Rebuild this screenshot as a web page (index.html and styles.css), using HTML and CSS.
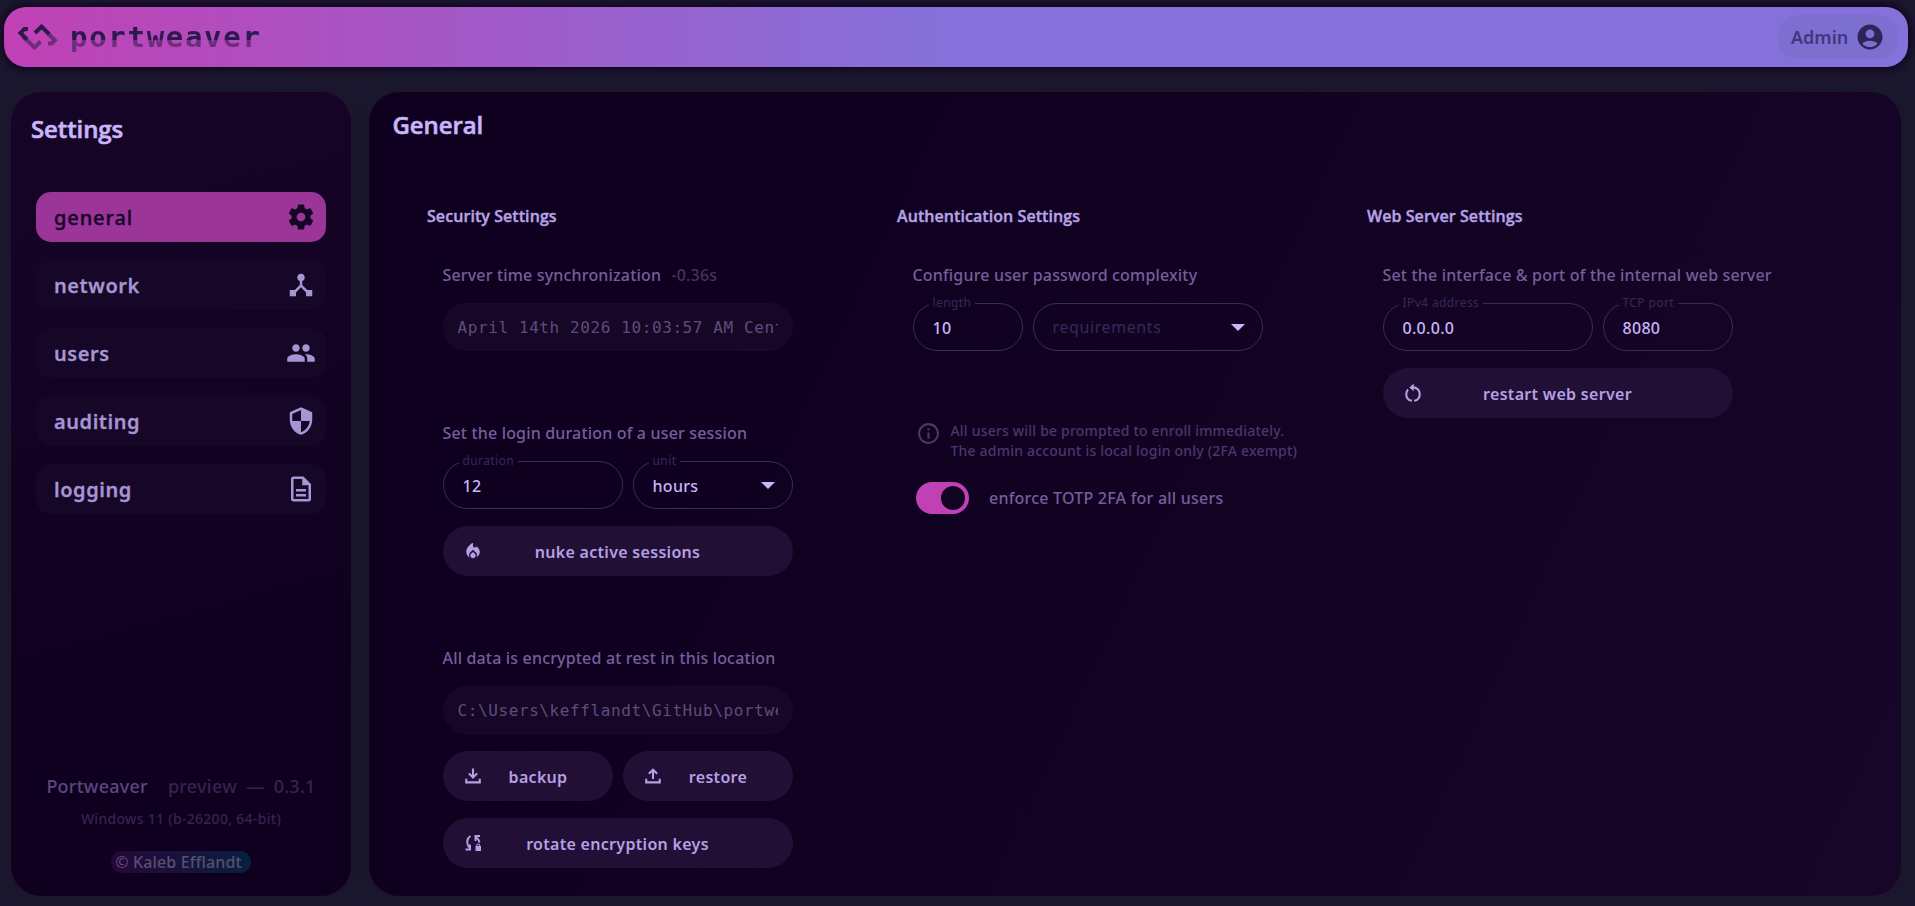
FILE: index.html
```html
<!DOCTYPE html>
<html lang="en">
<head>
<meta charset="utf-8">
<title>Portweaver – Settings</title>
<link rel="stylesheet" href="styles.css">
</head>
<body>
<header class="topbar">
  <div class="brand">
    <svg class="brand-mark" viewBox="0 0 42 28" width="42" height="28" fill="none" stroke-width="4">
      <path d="M6 13.500 L17.500 24.500 L23.500 18.500" stroke="#6d2c7c"/>
      <path d="M11 6 H7.500 L3.500 10 L10 16.500" stroke="#2d1a4d"/>
      <path d="M31 10.500 L37.800 17.300 L34.500 20.600 H31" stroke="#6d2c7c"/>
      <path d="M18 10 L24.500 3.500 L32 11" stroke="#2d1a4d"/>
    </svg>
    <span class="brand-name">portweaver</span>
  </div>
  <button class="account">
    <span>Admin</span>
    <svg viewBox="0 0 24 24" width="30" height="30"><path fill="currentColor" d="M12 2C6.480 2 2 6.480 2 12s4.480 10 10 10 10-4.480 10-10S17.520 2 12 2zm0 4c1.930 0 3.500 1.570 3.500 3.500S13.930 13 12 13s-3.500-1.570-3.500-3.500S10.070 6 12 6zm0 14c-2.030 0-4.430-.82-6.140-2.880C7.550 15.800 9.680 15 12 15s4.450.8 6.140 2.120C16.430 19.180 14.030 20 12 20z"/></svg>
  </button>
</header>

<main class="layout">
  <aside class="sidebar">
    <h1 class="sidebar-title">Settings</h1>
    <nav class="nav">
      <a class="nav-item nav-item--active"><span>general</span>
        <svg viewBox="0 0 24 24" width="30" height="30"><path fill="currentColor" d="M12 15.500A3.500 3.500 0 0 1 8.500 12 3.500 3.500 0 0 1 12 8.500a3.500 3.500 0 0 1 3.500 3.500 3.500 3.500 0 0 1-3.500 3.500m7.430-2.530c.04-.32.07-.64.07-.97s-.03-.66-.07-1l2.110-1.630c.19-.15.24-.42.12-.64l-2-3.460c-.12-.22-.39-.31-.61-.22l-2.490 1c-.52-.39-1.060-.73-1.690-.98l-.37-2.650A.506.506 0 0 0 14 2h-4c-.25 0-.46.18-.5.42l-.37 2.650c-.63.25-1.170.59-1.690.98l-2.490-1c-.22-.09-.49 0-.61.22l-2 3.460c-.13.22-.07.49.12.64L4.570 11c-.04.34-.07.67-.07 1s.03.65.07.97l-2.110 1.660c-.19.15-.25.42-.12.64l2 3.460c.12.22.39.3.61.22l2.490-1.010c.52.4 1.060.74 1.690.99l.37 2.650c.04.24.25.42.5.42h4c.25 0 .46-.18.5-.42l.37-2.650c.63-.26 1.170-.59 1.690-.99l2.490 1.010c.22.08.49 0 .61-.22l2-3.460c.12-.22.07-.49-.12-.64z"/></svg></a>
      <a class="nav-item"><span>network</span>
        <svg viewBox="0 0 24 24" width="32" height="32"><path fill="currentColor" d="M17 16l-4-4V8.820C14.160 8.400 15 7.300 15 6c0-1.660-1.340-3-3-3S9 4.340 9 6c0 1.300.84 2.400 2 2.820V12l-4 4H3v5h5v-3.050l4-4.200 4 4.200V21h5v-5h-4z"/></svg></a>
      <a class="nav-item"><span>users</span>
        <svg viewBox="0 0 24 24" width="30" height="30"><path fill="currentColor" d="M16 11c1.660 0 2.990-1.340 2.990-3S17.660 5 16 5c-1.660 0-3 1.340-3 3s1.340 3 3 3zm-8 0c1.660 0 2.990-1.340 2.990-3S9.660 5 8 5C6.340 5 5 6.340 5 8s1.340 3 3 3zm0 2c-2.330 0-7 1.170-7 3.500V19h14v-2.500c0-2.330-4.670-3.500-7-3.500zm8 0c-.29 0-.62.020-.97.050 1.160.84 1.970 1.970 1.970 3.450V19h6v-2.500c0-2.330-4.670-3.500-7-3.500z"/></svg></a>
      <a class="nav-item"><span>auditing</span>
        <svg viewBox="0 0 24 24" width="30" height="30"><path fill="currentColor" fill-rule="evenodd" d="M12 1L3 5v6c0 5.550 3.840 10.740 9 12 5.160-1.260 9-6.450 9-12V5l-9-4zm0 11h7c-.53 4.110-3.280 7.780-7 8.930V12H5V6.300l7-3.110V12z"/></svg></a>
      <a class="nav-item"><span>logging</span>
        <svg viewBox="0 0 24 24" width="30" height="30"><path fill="currentColor" d="M6 2a2 2 0 0 0-2 2v16c0 1.110.89 2 2 2h12a2 2 0 0 0 2-2V8l-6-6H6m0 2h7v5h5v11H6V4m2 8v2h8v-2H8m0 4v2h8v-2H8z"/></svg></a>
    </nav>
    <footer class="about">
      <div class="about-version"><span class="about-product">Portweaver</span><span>preview&ensp;—&ensp;0.3.1</span></div>
      <div class="about-os">Windows 11 (b-26200, 64-bit)</div>
      <div class="about-copy">© Kaleb Efflandt</div>
    </footer>
  </aside>

  <section class="content">
    <h2 class="content-title">General</h2>
    <div class="columns">
      <div class="column">
        <h3 class="column-title">Security Settings</h3>
        <div class="group group--time">
          <p class="label">Server time synchronization <span class="label-note">-0.36s</span></p>
          <div class="readout"><span>April 14th 2026 10:03:57 AM Central</span></div>
        </div>
        <div class="group group--session">
          <p class="label">Set the login duration of a user session</p>
          <div class="row">
            <fieldset class="field w180"><legend>duration</legend><span>12</span></fieldset>
            <fieldset class="field w160"><legend>unit</legend><span>hours</span><i class="caret"></i></fieldset>
          </div>
          <button class="btn">
            <svg viewBox="0 0 24 24" width="18" height="18"><path fill="currentColor" d="M16 6l-.44.550C14.380 8.020 12 7.190 12 5.300V1S3 5.500 3 13c0 3.600 1.900 6 4.600 7.600-.56-.79-.89-1.760-.89-2.800 0-1.320.52-2.800 1.470-3.740L12 10.300l3.820 3.760c.95.930 1.470 2.420 1.470 3.750 0 1.020-.31 2-.85 2.800 2.300-1.200 4.100-3.400 4.500-5.900.66-3.550-1.300-7.200-4.940-8.700zM12 13.200l-2.600 2.500C8.800 16.300 8.500 17 8.500 18c0 2 1.600 3.500 3.500 3.500s3.500-1.500 3.500-3.500c0-1-.3-1.700-.9-2.300L12 13.200z"/></svg>
            <span>nuke active sessions</span></button>
        </div>
        <div class="group group--data">
          <p class="label">All data is encrypted at rest in this location</p>
          <div class="readout"><span>C:\Users\kefflandt\GitHub\portweaver</span></div>
          <div class="row">
            <button class="btn w170">
              <svg viewBox="0 0 24 24" width="18" height="18" fill="none" stroke="currentColor" stroke-width="2.800"><path d="M12 2v12M6.500 8.500L12 14l5.500-5.500M3 15.500V20.500h18V15.500"/></svg>
              <span>backup</span></button>
            <button class="btn w170">
              <svg viewBox="0 0 24 24" width="18" height="18" fill="none" stroke="currentColor" stroke-width="2.800"><path d="M12 16V4M6.500 9L12 3.500 17.500 9M3 15.500V20.500h18V15.500"/></svg>
              <span>restore</span></button>
          </div>
          <button class="btn">
            <svg viewBox="0 0 18 18" width="18" height="18"><path fill="none" stroke="currentColor" stroke-width="2" d="M6.500 2C3 4 2 9 5 13.500M1.500 15.500H6V10.500M15.500 8.500C15 6.500 14 4.500 12 3M11.500 7V2H16"/><path fill="currentColor" d="M11.500 12h.7v-.6a2 2 0 0 1 4 0v.6h.8v5h-5.500zM13.200 12h2v-.6a1 1 0 0 0-2 0z"/></svg>
            <span>rotate encryption keys</span></button>
        </div>
      </div>

      <div class="column">
        <h3 class="column-title">Authentication Settings</h3>
        <div class="group group--time">
          <p class="label">Configure user password complexity</p>
          <div class="row">
            <fieldset class="field w110"><legend>length</legend><span>10</span></fieldset>
            <fieldset class="field field--plain w230"><span class="placeholder">requirements</span><i class="caret"></i></fieldset>
          </div>
        </div>
        <div class="notice">
          <svg viewBox="0 0 24 24" width="25" height="25"><path fill="currentColor" d="M11 7h2v2h-2zm0 4h2v6h-2zm1-9C6.480 2 2 6.480 2 12s4.480 10 10 10 10-4.480 10-10S17.520 2 12 2zm0 18c-4.410 0-8-3.590-8-8s3.590-8 8-8 8 3.590 8 8-3.590 8-8 8z"/></svg>
          <p>All users will be prompted to enroll immediately.<br>The admin account is local login only (2FA exempt)</p>
        </div>
        <div class="toggle-row"><span class="toggle"></span><span>enforce TOTP 2FA for all users</span></div>
      </div>

      <div class="column">
        <h3 class="column-title">Web Server Settings</h3>
        <div class="group">
          <p class="label">Set the interface &amp; port of the internal web server</p>
          <div class="row">
            <fieldset class="field w210"><legend>IPv4 address</legend><span>0.0.0.0</span></fieldset>
            <fieldset class="field w130"><legend>TCP port</legend><span>8080</span></fieldset>
          </div>
          <button class="btn">
            <svg viewBox="0 0 24 24" width="18" height="18"><path fill="none" stroke="currentColor" stroke-width="2.800" d="M12 4.500C17 4.500 21 8.500 21 13.500 21 18 17.800 21.500 13.500 22.300M10.500 22.300C6.200 21.500 3 18 3 13.500 3 11.200 3.900 9 5.400 7.400"/><path fill="currentColor" d="M13 -.5v10L7 4.500z"/></svg>
            <span>restart web server</span></button>
        </div>
      </div>
    </div>
  </section>
</main>
</body>
</html>
```

FILE: styles.css
```css
* { box-sizing: border-box; }
body {
  margin: 0;
  height: 906px;
  overflow: hidden;
  background: #1b172e;
  font-family: "Noto Sans", "Open Sans", sans-serif;
  font-weight: 500;
  color: #c8b5fa;
}
h1, h2, h3, p { margin: 0; }
button { font: inherit; border: 0; }

.topbar {
  display: flex;
  align-items: center;
  justify-content: space-between;
  height: 60px;
  margin: 7px 7px 0 4px;
  padding: 0 10px 0 13px;
  border-radius: 22px;
  background: linear-gradient(90deg, #c041b5 0%, #8472da 50%, #8472da 100%);
  box-shadow: 0 0 8px 2px #10001f;
}
.brand { display: flex; align-items: center; gap: 11px; }
.brand-name {
  font-family: "DejaVu Sans Mono", monospace;
  font-size: 29px;
  line-height: 30px;
  letter-spacing: 1.700px;
  font-weight: 700;
  color: transparent;
  background: linear-gradient(#2d1a4d 60%, #6d2c7c 60%);
  background-clip: text;
}
.account {
  display: flex;
  align-items: center;
  gap: 7px;
  width: 120px;
  height: 44px;
  padding: 0 12px 0 13px;
  border-radius: 20px;
  background: #7d6fd0;
  color: #2f2459;
  font-size: 18px;
}
.account span { color: #443583; font-weight: 600; }
.account svg { flex: none; }

.layout { display: flex; gap: 17.500px; margin: 25px 14px 0 11px; height: 804px; }
.sidebar, .content { border-radius: 30px; box-shadow: 0 0 12px #1b1829; }
.sidebar {
  display: flex;
  flex-direction: column;
  width: 340px;
  padding: 18px 25px 23px;
  background: linear-gradient(165deg, #160526, #100020 75%);
}
.sidebar-title, .content-title {
  font-family: "Open Sans", sans-serif;
  font-size: 24px;
  line-height: 38px;
  font-weight: 600;
  letter-spacing: -.1px;
  -webkit-text-stroke: .6px currentColor;
}
.sidebar-title { margin-left: -5px; }
.nav { display: flex; flex-direction: column; gap: 18px; margin-top: 44px; }
.nav-item {
  display: flex;
  align-items: center;
  justify-content: space-between;
  height: 50px;
  padding: 0 10px 0 18px;
  border-radius: 15px;
  background: #160627;
  color: #a695d3;
  font-size: 20px;
  font-weight: 600;
  letter-spacing: .55px;
  -webkit-text-stroke: .3px currentColor;
}
.nav-item svg { width: 30px; flex: none; }
.nav-item--active { background: #9b3598; color: #160526; font-weight: 500; letter-spacing: .9px; }

.about { display: flex; flex-direction: column; align-items: center; margin-top: auto; color: #37234f; }
.about-version { display: flex; gap: 20px; font-size: 18px; line-height: 26px; letter-spacing: .25px; }
.about-product { color: #5b4780; }
.about-os { margin-top: 9px; font-size: 14px; line-height: 22px; letter-spacing: .3px; }
.about-copy {
  margin-top: 21px;
  padding: 0 9px 0 4px;
  border-radius: 11px;
  background: linear-gradient(90deg, #280538, #07203f);
  color: #56506f;
  font-size: 16px;
  line-height: 22px;
  letter-spacing: .15px;
}

.content { flex: 1; padding: 14px 24px 0; background: linear-gradient(115deg, #100020 20%, #170627 100%); }
.columns { display: grid; grid-template-columns: 470px 470px 1fr; margin: 61px 0 0 34px; }
.column-title {
  margin-left: .5px;
  font-family: "Open Sans", sans-serif;
  font-size: 16px;
  line-height: 22px;
  font-weight: 600;
  letter-spacing: .07px;
  color: #b5a3e5;
  -webkit-text-stroke: .4px currentColor;
}
.group { display: flex; flex-direction: column; align-items: flex-start; margin-left: 16px; }
.column-title + .group { margin-top: 36px; }
.label { font-size: 16px; line-height: 24px; letter-spacing: .17px; color: #755f9b; white-space: nowrap; }
.label-note { margin-left: 6px; color: #46315f; }
.group--time { height: 158px; }
.group--session { height: 225px; }
.readout {
  width: 350px;
  height: 48px;
  margin-top: 16px;
  padding: 0 14px;
  border: 1px solid #1a0929;
  border-radius: 24px;
  background: #170726;
  color: #604b7e;
  font-family: "DejaVu Sans Mono", monospace;
  font-size: 16px;
  font-weight: 400;
  line-height: 48px;
}
.readout span { display: block; overflow: hidden; white-space: pre; letter-spacing: .6px; }
.row { display: flex; align-items: flex-end; gap: 10px; }
.field {
  position: relative;
  display: block;
  height: 57px;
  min-width: 0;
  margin: 7px 0 0;
  padding: 0 20px 0 15px;
  border: 1px solid #3a2a5f;
  border-radius: 24px;
  color: #c8b5fa;
  font-size: 16px;
}
.field legend { height: 18px; padding: 0 4px; font-size: 12px; line-height: 18px; font-weight: 400; letter-spacing: .4px; color: #342a59; }
.field > span { display: block; padding-left: 4px; line-height: 24px; margin-top: 3.500px; letter-spacing: .3px; }
.field--plain { height: 48px; }
.field .placeholder { margin-top: 11px; color: #342a59; font-weight: 400; letter-spacing: .6px; }
.caret { position: absolute; right: 17px; bottom: 19px; border: 7px solid transparent; border-top-color: #c8b5fa; border-bottom: 0; }
.btn {
  position: relative;
  display: flex;
  align-items: center;
  justify-content: center;
  width: 350px;
  height: 50px;
  margin-top: 17px;
  padding: 2px 0 0;
  border-radius: 25px;
  background: #220f35;
  color: #b5a0e3;
  font-size: 16px;
  font-weight: 600;
  letter-spacing: .3px;
}
.btn svg { position: absolute; left: 21px; top: 16px; }
.w110 { width: 110px; }
.w130 { width: 130px; }
.w160 { width: 160px; }
.w170 { width: 170px; padding-left: 21px; }
.w180 { width: 180px; }
.w210 { width: 210px; }
.w230 { width: 230px; }
.notice { display: flex; gap: 10px; margin-left: 19px; color: #4b376a; font-size: 14px; line-height: 20px; letter-spacing: .2px; white-space: nowrap; }
.toggle-row { display: flex; align-items: center; gap: 20px; margin: 21px 0 0 19.500px; color: #755f9b; font-size: 16px; letter-spacing: .22px; }
.toggle { display: flex; justify-content: flex-end; width: 53px; height: 32px; padding: 4px; border-radius: 16px; background: #c041b5; }
.toggle::before { content: ""; width: 24px; height: 24px; border-radius: 50%; background: #130322; }
```
